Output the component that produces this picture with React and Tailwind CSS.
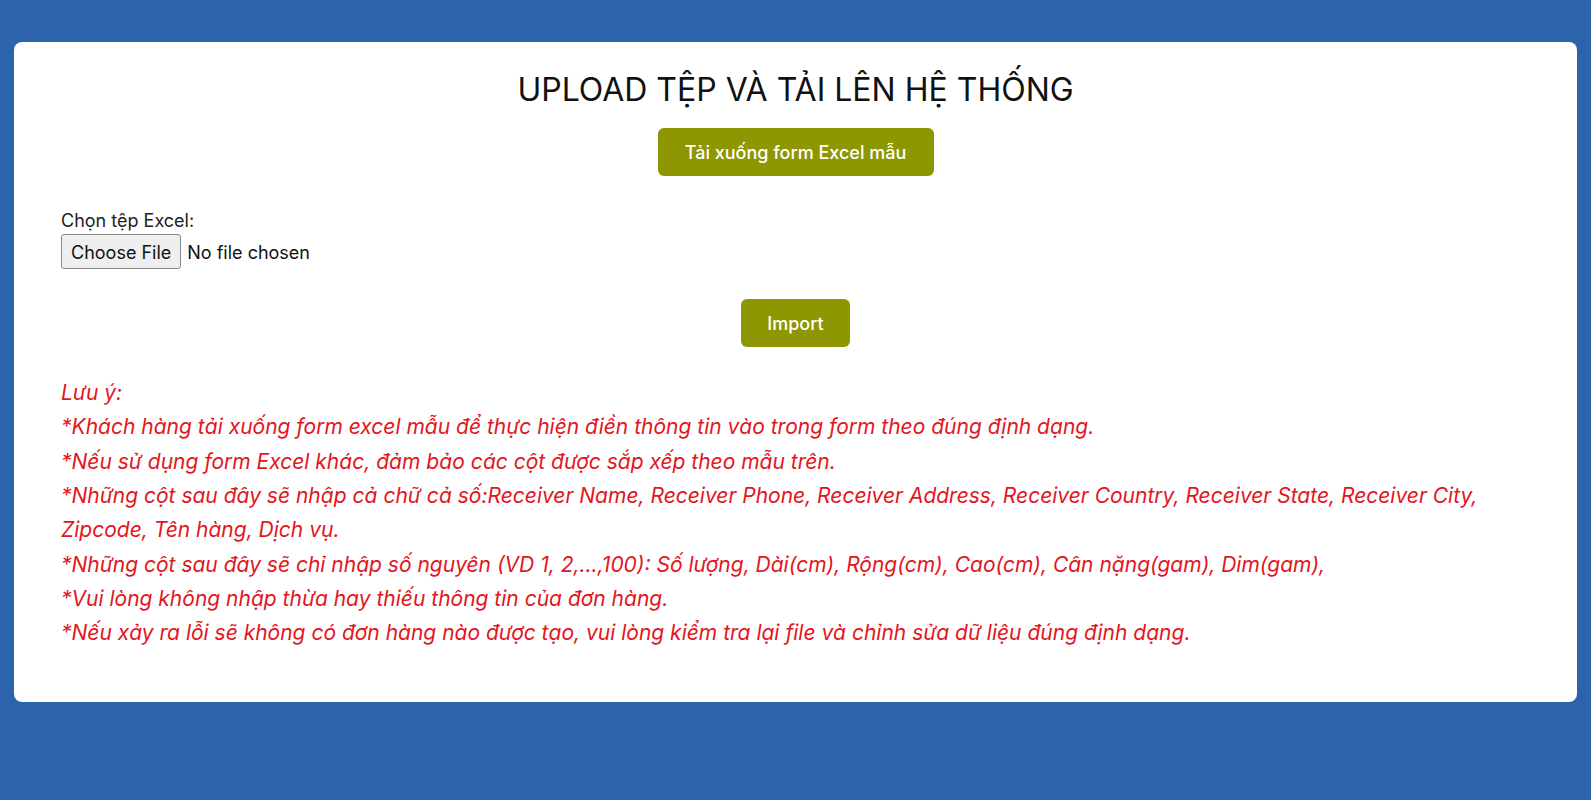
const notes = [
  "Lưu ý:",
  "*Khách hàng tải xuống form excel mẫu để thực hiện điền thông tin vào trong form theo đúng định dạng.",
  "*Nếu sử dụng form Excel khác, đảm bảo các cột được sắp xếp theo mẫu trên.",
  "*Những cột sau đây sẽ nhập cả chữ cả số:Receiver Name, Receiver Phone, Receiver Address, Receiver Country, Receiver State, Receiver City, Zipcode, Tên hàng, Dịch vụ.",
  "*Những cột sau đây sẽ chỉ nhập số nguyên (VD 1, 2,...,100): Số lượng, Dài(cm), Rộng(cm), Cao(cm), Cân nặng(gam), Dim(gam),",
  "*Vui lòng không nhập thừa hay thiếu thông tin của đơn hàng.",
  "*Nếu xảy ra lỗi sẽ không có đơn hàng nào được tạo, vui lòng kiểm tra lại file và chỉnh sửa dữ liệu đúng định dạng.",
];

function OliveButton({ children, className = "" }) {
  return (
    <button
      type="button"
      className={`h-[48px] rounded-[6px] bg-[#8e9602] text-[18px] font-medium text-white ${className}`}
    >
      {children}
    </button>
  );
}

export default function App() {
  return (
    <div className="min-h-[800px] bg-[#2b64ad] px-[14px] pt-[42px] font-['Inter','Roboto',sans-serif]">
      <div className="rounded-[8px] bg-white px-[47px] pb-[51px] pt-[29px]">
        <h1 className="text-center text-[32px] font-normal leading-[38px] text-[#111]">
          UPLOAD TỆP VÀ TẢI LÊN HỆ THỐNG
        </h1>
        <div className="mt-[19px] flex justify-center">
          <OliveButton className="w-[276px]">Tải xuống form Excel mẫu</OliveButton>
        </div>

        <div className="mt-[31px]">
          <label className="block text-[18px] leading-[27px] text-[#222]">Chọn tệp Excel:</label>
          <input
            type="file"
            className="block text-[18px] leading-[35px] text-[#111] file:mr-[6px] file:h-[35px] file:rounded-[3px] file:border file:border-[#8a8a8a] file:bg-[#efefef] file:px-[9px] file:text-[18px] file:text-[#111]"
          />
        </div>

        <div className="mt-[29px] flex justify-center">
          <OliveButton className="w-[109px]">Import</OliveButton>
        </div>

        <div className="mt-[29px] text-[21px] italic leading-[34.35px] text-[#e3161d]">
          {notes.map((line, i) => (
            <p key={i}>{line}</p>
          ))}
        </div>
      </div>
    </div>
  );
}
